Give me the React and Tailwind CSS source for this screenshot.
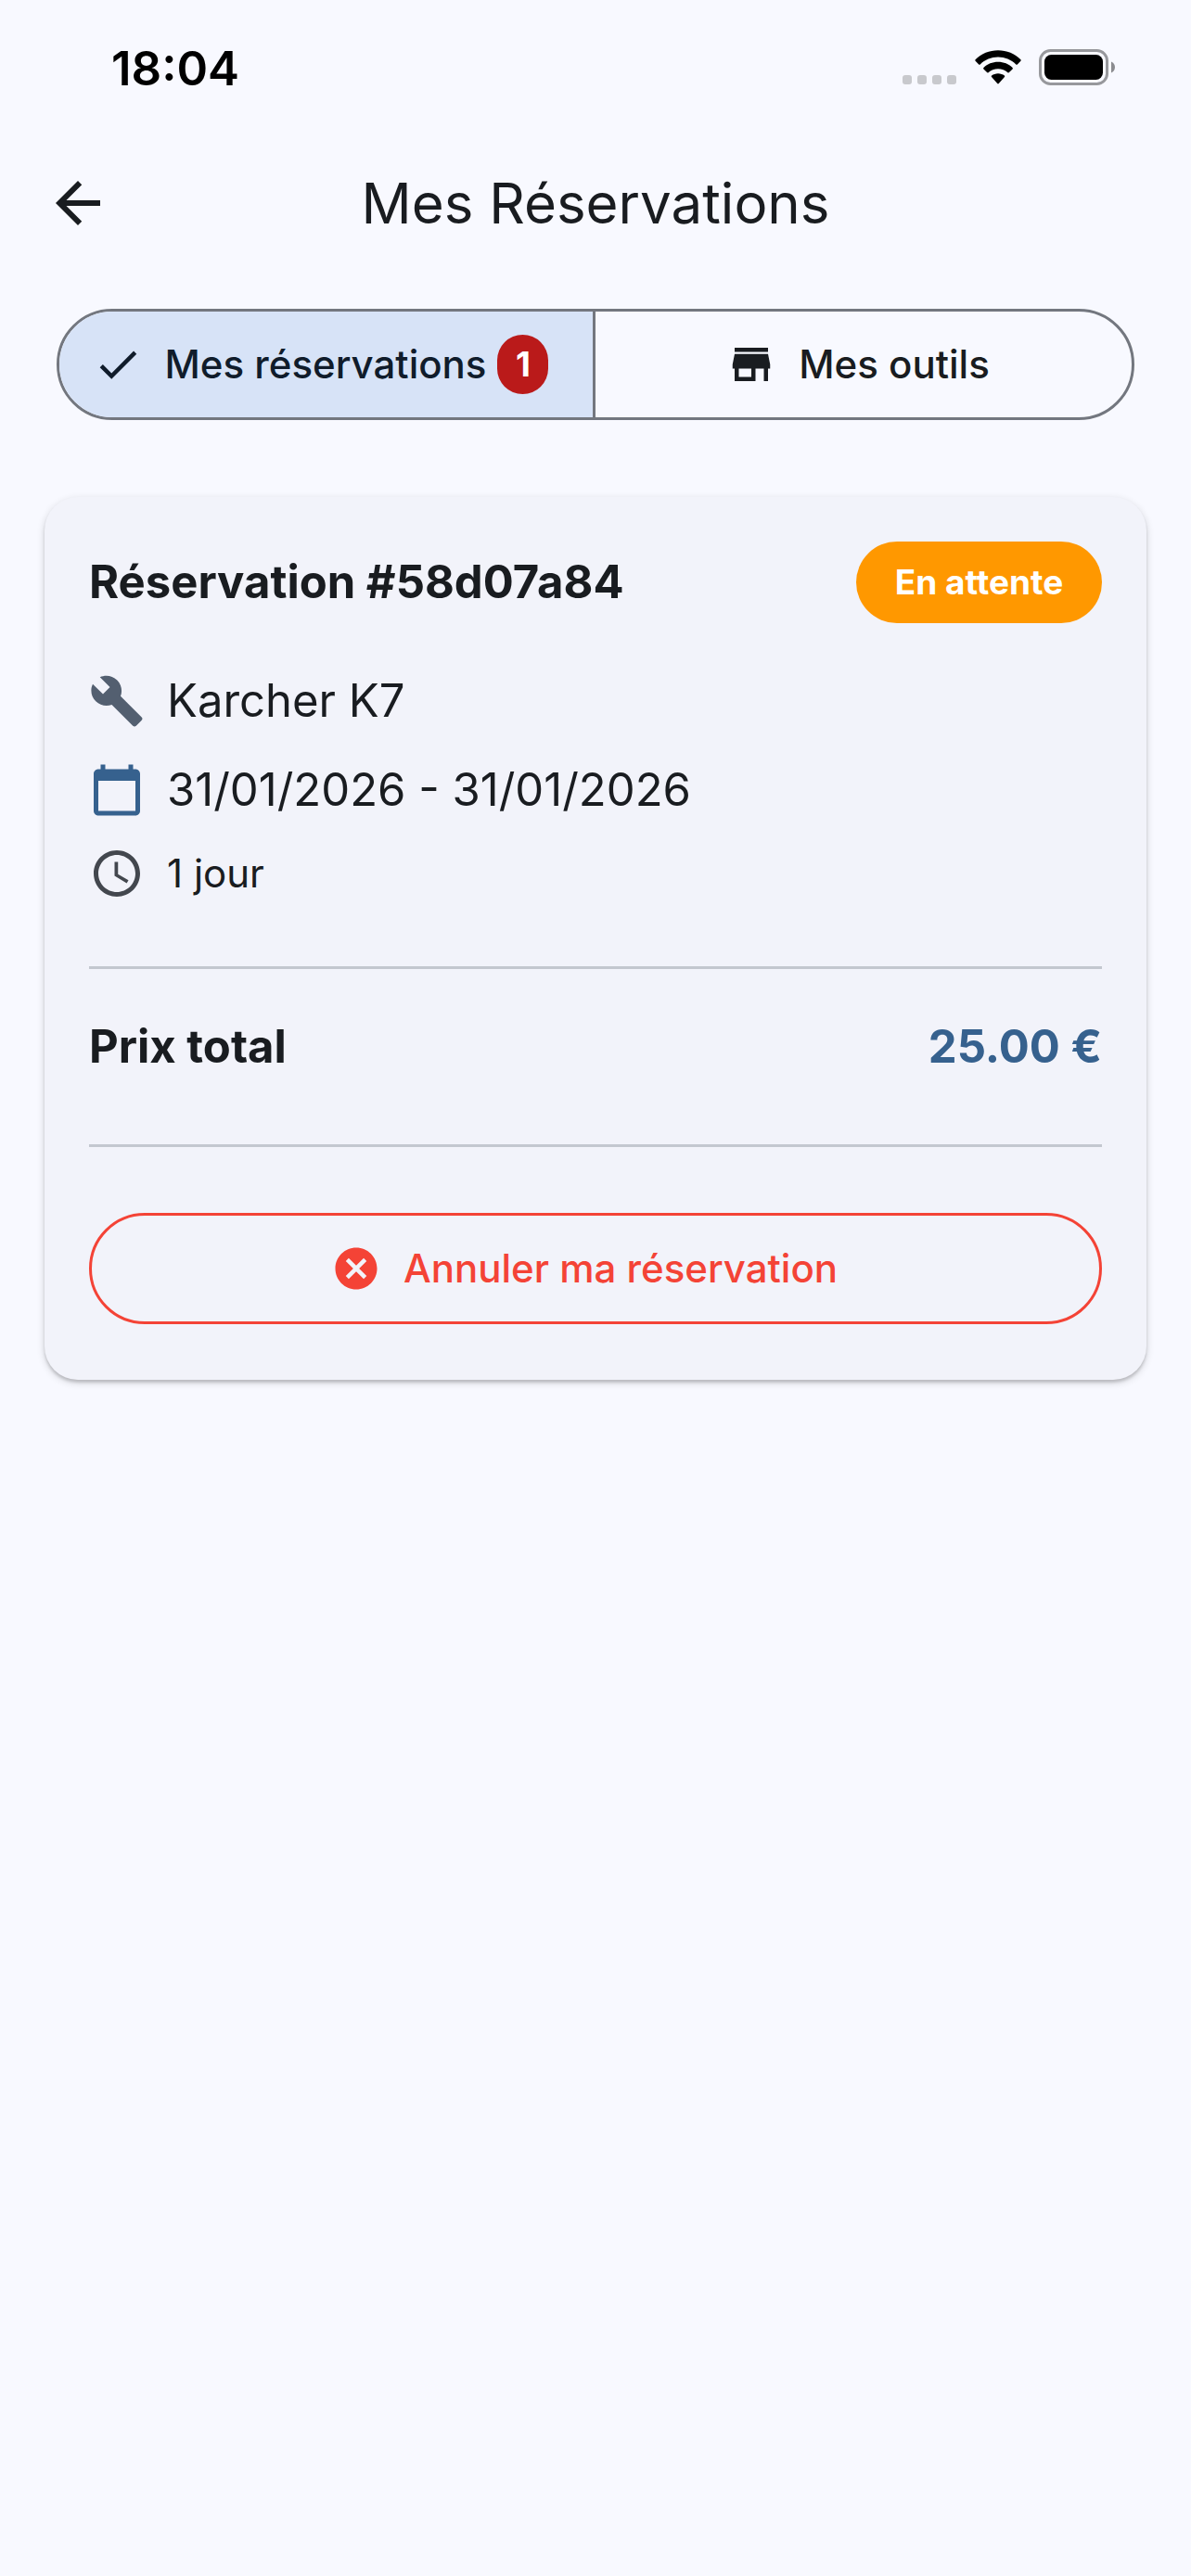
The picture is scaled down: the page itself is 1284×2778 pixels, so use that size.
import {
  MdAccessTime,
  MdArrowBack,
  MdBuild,
  MdCalendarToday,
  MdCancel,
  MdCheck,
  MdStore,
} from "react-icons/md";

function WifiIcon() {
  return (
    <svg width="50" height="37" viewBox="0 0 51 37" aria-hidden="true">
      <path d="M25.5 0C16 0 7.100 3.700 .600 10.100c-.5.5-.5 1.100 0 1.600l3.700 3.700c.4.400 1.100.400 1.500 0C11.100 10.400 18 7.400 25.500 7.400s14.400 3 19.700 8c.4.400 1.100.400 1.500 0l3.700-3.700c.5-.5.5-1.100 0-1.600C43.900 3.700 35 0 25.500 0z" />
      <path d="M25.500 12.700c-6.100 0-11.700 2.300-15.900 6.200-.5.500-.5 1.100 0 1.600l3.700 3.700c.4.400 1.100.400 1.500.1 2.900-2.500 6.600-4 10.700-4s7.800 1.500 10.700 4c.4.300 1.100.3 1.500-.1l3.700-3.700c.5-.5.5-1.100 0-1.600-4.200-3.900-9.800-6.200-15.900-6.200z" />
      <path d="M25.500 25.300c-2.700 0-5.100.9-7 2.400-.5.400-.5 1.100-.1 1.600l6.300 7.100c.4.500 1.200.5 1.600 0l6.300-7.100c.4-.5.4-1.200-.1-1.600-1.900-1.500-4.300-2.400-7-2.400z" />
    </svg>
  );
}

function BatteryIcon() {
  return (
    <svg width="82" height="39" viewBox="0 0 82 39" aria-hidden="true">
      <rect x="1.500" y="1.500" width="72" height="36" rx="11" fill="none" stroke="#97989c" strokeWidth="3" />
      <rect x="6" y="6" width="63" height="27" rx="7.500" />
      <path d="M78 13.500c2.400 1 4 3.300 4 6s-1.600 5-4 6z" fill="#8b8c90" />
    </svg>
  );
}

function StatusBar() {
  return (
    <div className="flex h-[147px] items-start justify-between pt-[53px] pl-[120px] pr-[82px] text-black">
      <span className="text-[51px] leading-[41px] font-semibold">18:04</span>
      <div className="flex items-start">
        <div className="mt-7 mr-5 flex gap-1.5">
          {[0, 1, 2, 3].map((dot) => (
            <span key={dot} className="h-2.5 w-2.5 rounded-[3px] bg-[#c8c9cd]" />
          ))}
        </div>
        <div className="mt-px mr-[19px]">
          <WifiIcon />
        </div>
        <BatteryIcon />
      </div>
    </div>
  );
}

function Header() {
  return (
    <header className="grid h-36 grid-cols-[72px_1fr_72px] items-center px-12">
      <button type="button" aria-label="Retour">
        <MdArrowBack size={72} />
      </button>
      <h1 className="text-center text-[60px] leading-[72px]">Mes Réservations</h1>
    </header>
  );
}

function Segments() {
  return (
    <div className="mx-[61px] mt-[42px] grid h-[120px] grid-cols-2 overflow-hidden rounded-full border-[3px] border-[#73777f] text-[42px] leading-[60px] font-medium">
      <button
        type="button"
        aria-pressed="true"
        className="flex items-center justify-center border-r-[3px] border-[#73777f] bg-[#d7e3f7] pr-3 text-[#101c2b]"
      >
        <MdCheck size={54} />
        <span className="ml-6">Mes réservations</span>
        <span className="ml-3 flex h-16 w-[55px] items-center justify-center rounded-full bg-[#ba1a1a] text-[37px] font-bold text-white">
          1
        </span>
      </button>
      <button type="button" aria-pressed="false" className="flex items-center justify-center gap-6 pr-3">
        <MdStore size={54} />
        <span>Mes outils</span>
      </button>
    </div>
  );
}

function ReservationCard() {
  return (
    <article className="mx-12 mt-[83px] rounded-[36px] bg-[#f2f3fa] px-12 pt-12 pb-[60px] shadow-[0_3px_9px_rgba(0,0,0,0.16),0_3px_3px_rgba(0,0,0,0.14)]">
      <div className="flex items-center justify-between">
        <h2 className="text-[49px] leading-[72px] font-bold">Réservation #58d07a84</h2>
        <span className="min-w-[265px] rounded-full bg-[#ff9800] px-9 py-[18px] text-center text-[37px] leading-[52px] font-bold text-white">
          En attente
        </span>
      </div>

      <ul className="mt-12 flex flex-col gap-6">
        <li className="flex items-center gap-6 text-[49px] leading-[72px]">
          <MdBuild size={60} className="text-[#535f70]" />
          Karcher K7
        </li>
        <li className="flex items-center gap-6 text-[49px] leading-[72px]">
          <MdCalendarToday size={60} className="text-[#36618e]" />
          31/01/2026 - 31/01/2026
        </li>
        <li className="flex items-center gap-6 text-[42px] leading-[60px]">
          <MdAccessTime size={60} className="text-[#43474e]" />
          1 jour
        </li>
      </ul>

      <div className="mt-[70px] flex items-center justify-between border-y-[3px] border-[#c3c7cf] pt-12 pb-[69px] text-[49px] leading-[72px] font-bold">
        <span>Prix total</span>
        <span className="text-[#36618e]">25.00 €</span>
      </div>

      <button
        type="button"
        className="mt-[71px] flex h-[120px] w-full items-center justify-center gap-6 rounded-full border-[3px] border-[#f44336] pr-6 text-[42px] leading-[60px] font-medium text-[#f44336]"
      >
        <MdCancel size={54} />
        <span>Annuler ma réservation</span>
      </button>
    </article>
  );
}

export default function App() {
  return (
    <div className="min-h-screen bg-[#f8f9ff] font-['Inter',sans-serif] text-[#191c20]">
      <StatusBar />
      <Header />
      <main>
        <Segments />
        <ReservationCard />
      </main>
    </div>
  );
}
